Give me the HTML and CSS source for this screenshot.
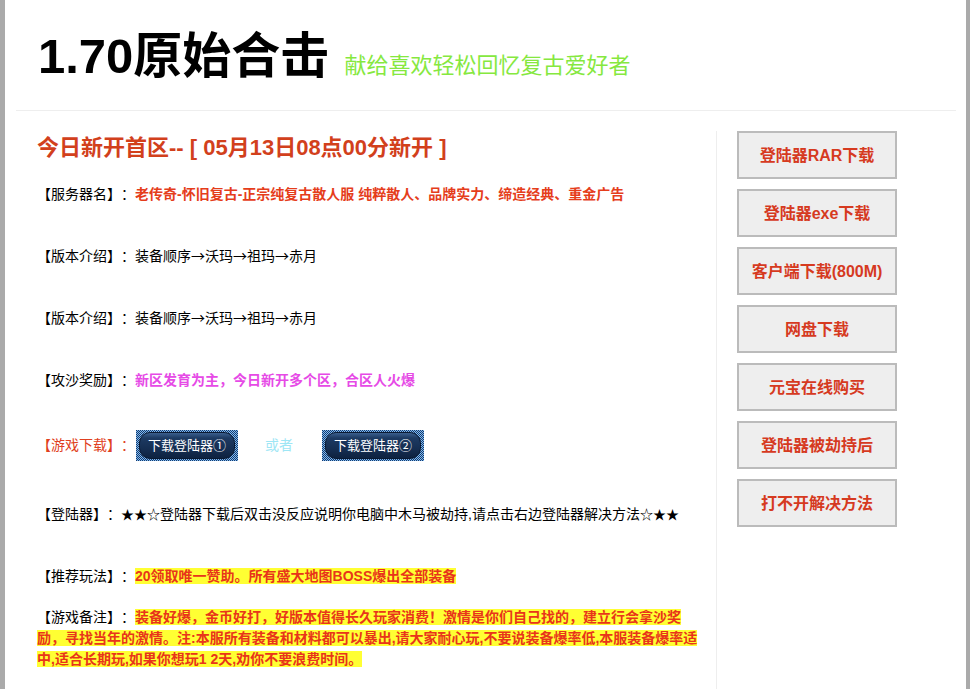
FILE: index.html
```html
<!DOCTYPE html>
<html lang="zh-CN">
<head>
<meta charset="utf-8">
<title>1.70原始合击</title>
<link rel="stylesheet" href="styles.css">
</head>
<body>
<div class="page">
  <div class="wrap">
    <header class="header">
      <h1 class="title">1.70原始合击</h1>
      <span class="subtitle">献给喜欢轻松回忆复古爱好者</span>
    </header>
    <main class="main">
      <section class="info">
        <h2 class="headline">今日新开首区-- [ 05月13日08点00分新开 ]</h2>
        <p class="row first">【服务器名】：<b class="red">老传奇-怀旧复古-正宗纯复古散人服 纯粹散人、品牌实力、缔造经典、重金广告</b></p>
        <p class="row tight">【版本介绍】：装备顺序<span class="ar">→</span>沃玛<span class="ar">→</span>祖玛<span class="ar">→</span>赤月</p>
        <p class="row tight">【版本介绍】：装备顺序<span class="ar">→</span>沃玛<span class="ar">→</span>祖玛<span class="ar">→</span>赤月</p>
        <p class="row">【攻沙奖励】：<b class="pink">新区发育为主，今日新开多个区，合区人火爆</b></p>
        <div class="row dlrow">
          <span class="dl-label">【游戏下载】：</span>
          <a class="dl" href="#"><span class="dl-in">下载登陆器①</span></a>
          <span class="or">或者</span>
          <a class="dl" href="#"><span class="dl-in">下载登陆器②</span></a>
        </div>
        <p class="row after-dl">【登陆器】：<span class="star">★★☆</span>登陆器下载后双击没反应说明你电脑中木马被劫持,请点击右边登陆器解决方法<span class="star">☆★★</span></p>
        <p class="row">【推荐玩法】：<b class="hl">20领取唯一赞助。所有盛大地图BOSS爆出全部装备</b></p>
        <p class="row note">【游戏备注】：<b class="hl">装备好爆，金币好打，好版本值得长久玩家消费！激情是你们自己找的，建立行会拿沙奖励，寻找当年的激情。注:本服所有装备和材料都可以暴出,请大家耐心玩,不要说装备爆率低,本服装备爆率适中,适合长期玩,如果你想玩1 2天,劝你不要浪费时间。</b></p>
      </section>
      <nav class="side">
        <a class="btn" href="#">登陆器RAR下载</a>
        <a class="btn" href="#">登陆器exe下载</a>
        <a class="btn" href="#">客户端下载(800M)</a>
        <a class="btn" href="#">网盘下载</a>
        <a class="btn" href="#">元宝在线购买</a>
        <a class="btn" href="#">登陆器被劫持后</a>
        <a class="btn" href="#">打不开解决方法</a>
      </nav>
    </main>
  </div>
</div>
</body>
</html>
```

FILE: styles.css
```css
html, body {
  margin: 0;
  padding: 0;
  background: #fff;
}
body {
  font-family: "Liberation Sans", "Noto Sans CJK SC", sans-serif;
  color: #000;
  text-spacing-trim: space-all;
}
.page {
  box-sizing: border-box;
  width: 970px;
  height: 689px;
  overflow: hidden;
  border-left: 5px solid #aaa;
  border-right: 4px solid #aaa;
}
.wrap {
  margin: 0 10px 0 11px;
  height: 100%;
  display: flex;
  flex-direction: column;
}
.header {
  display: flex;
  align-items: baseline;
  padding: 27px 0 24px 22px;
  border-bottom: 1px solid #eee;
}
.title {
  margin: 0;
  font-size: 49px;
  line-height: 59px;
  font-weight: bold;
  color: #000;
}
.subtitle {
  margin-left: 15px;
  font-size: 22px;
  color: #86e83f;
}
.main {
  display: flex;
  flex: 1;
  margin-top: 20px;
}
.info {
  box-sizing: border-box;
  width: 701px;
  padding: 0 16px 0 21px;
  border-right: 1px solid #eee;
}
.headline {
  margin: 4px 0 0;
  font-size: 22px;
  line-height: 26px;
  font-weight: bold;
  color: #d2401c;
}
.row {
  margin: 41px 0 0;
  font-size: 14px;
  line-height: 21px;
}
.row.first {
  margin-top: 23px;
}
.row.tight {
  margin-top: 40px;
}
.ar {
  font-family: "Noto Sans CJK SC", sans-serif;
}
.star {
  font-size: 13px;
}
.red {
  color: #e53d1b;
}
.pink {
  color: #e64ae6;
}
.hl {
  color: #e8351a;
  background: #ffff33;
}
.dlrow {
  display: flex;
  align-items: center;
  height: 31px;
  margin-top: 39px;
}
.dl-label {
  color: #e04020;
}
.dl {
  display: flex;
  box-sizing: border-box;
  width: 102px;
  height: 31px;
  margin-left: 1px;
  padding: 2px 3px;
  background: repeating-conic-gradient(#7fbaf0 0 25%, #183a6c 0 50%) 0 0 / 2px 2px;
  text-decoration: none;
}
.dl-in {
  flex: 1;
  display: flex;
  align-items: center;
  justify-content: center;
  border-radius: 11px;
  border: 1px solid #0a1a33;
  background: linear-gradient(#3a5f8e 0, #1d3a62 20%, #142c4f 70%, #0e2240 100%);
  color: #fff;
  font-size: 13px;
}
.or {
  margin: 0 28px 0 27px;
  color: #9ee6f5;
}
.after-dl {
  margin-top: 43px;
}
.note {
  margin-top: 20px;
}
.side {
  display: flex;
  flex-direction: column;
  gap: 10px;
  padding-left: 20px;
}
.btn {
  box-sizing: border-box;
  width: 160px;
  height: 48px;
  display: flex;
  align-items: center;
  justify-content: center;
  padding-bottom: 3px;
  border: 2px solid #bbb;
  background: #eee;
  color: #d63a1f;
  font-size: 16px;
  font-weight: bold;
  text-decoration: none;
}
```
